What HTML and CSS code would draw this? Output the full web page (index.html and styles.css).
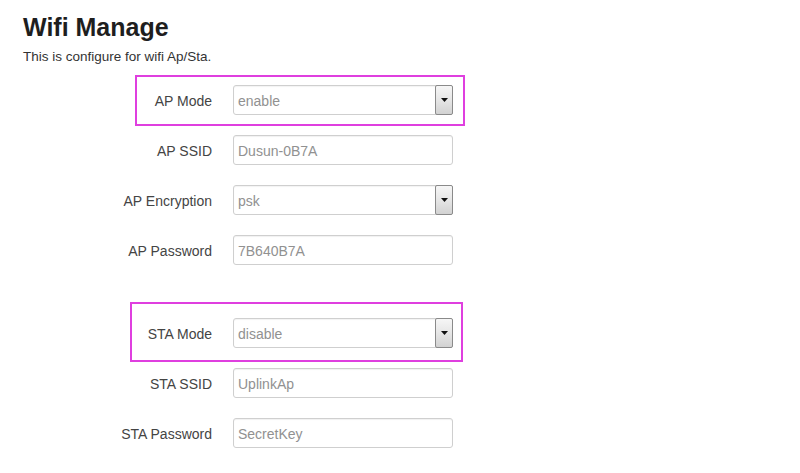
FILE: index.html
```html
<!DOCTYPE html>
<html>
<head>
<meta charset="utf-8">
<link rel="stylesheet" href="styles.css">
</head>
<body>
<div class="page">
  <h1 class="title">Wifi Manage</h1>
  <p class="subtitle">This is configure for wifi Ap/Sta.</p>
  <form class="form">
    <div class="section">
      <div class="row">
        <label class="label">AP Mode</label>
        <div class="select"><span class="value">enable</span><span class="btn"><svg width="7" height="4" viewBox="0 0 7 4"><path d="M0 0H7L3.5 4Z" fill="#111"/></svg></span></div>
      </div>
      <div class="row">
        <label class="label">AP SSID</label>
        <div class="input"><span class="value">Dusun-0B7A</span></div>
      </div>
      <div class="row">
        <label class="label">AP Encryption</label>
        <div class="select"><span class="value">psk</span><span class="btn"><svg width="7" height="4" viewBox="0 0 7 4"><path d="M0 0H7L3.5 4Z" fill="#111"/></svg></span></div>
      </div>
      <div class="row">
        <label class="label">AP Password</label>
        <div class="input"><span class="value">7B640B7A</span></div>
      </div>
    </div>
    <div class="section section-sta">
      <div class="row">
        <label class="label">STA Mode</label>
        <div class="select"><span class="value">disable</span><span class="btn"><svg width="7" height="4" viewBox="0 0 7 4"><path d="M0 0H7L3.5 4Z" fill="#111"/></svg></span></div>
      </div>
      <div class="row">
        <label class="label">STA SSID</label>
        <div class="input"><span class="value">UplinkAp</span></div>
      </div>
      <div class="row">
        <label class="label">STA Password</label>
        <div class="input"><span class="value">SecretKey</span></div>
      </div>
    </div>
  </form>
  <div class="mark mark-ap"></div>
  <div class="mark mark-sta"></div>
</div>
</body>
</html>
```
FILE: styles.css
```css
html, body {
  margin: 0;
  padding: 0;
  background: #fff;
}
.page {
  position: relative;
  width: 800px;
  height: 473px;
  padding: 12px 0 0 23px;
  box-sizing: border-box;
  font-family: "Liberation Sans", Arial, sans-serif;
  overflow: hidden;
}
.title {
  margin: 0;
  font-size: 25px;
  line-height: 30px;
  font-weight: bold;
  color: #1e1e1e;
}
.subtitle {
  margin: 7px 0 0 0;
  font-size: 13.5px;
  line-height: 16px;
  color: #333;
}
.form {
  margin-top: 20px;
  display: flex;
  flex-direction: column;
  gap: 53px;
}
.section {
  display: flex;
  flex-direction: column;
  gap: 20px;
}
.row {
  display: flex;
  align-items: center;
  gap: 21px;
  height: 30px;
}
.label {
  width: 189px;
  text-align: right;
  font-size: 14px;
  color: #444;
  padding-top: 2px;
}
.input, .select {
  width: 220px;
  height: 30px;
  box-sizing: border-box;
  border: 1px solid #cfcfcf;
  border-radius: 3px;
  box-shadow: inset 0 1px 1px rgba(0,0,0,0.06);
  display: flex;
  align-items: center;
  background: #fff;
}
.value {
  flex: 1;
  padding: 1px 0 0 4px;
  font-size: 14px;
  color: #919191;
}
.select {
  border-radius: 3px;
  box-shadow: inset 0 1px 1px rgba(0,0,0,0.05);
}
.btn {
  width: 18px;
  height: 30px;
  margin: -1px -1px -1px 0;
  box-sizing: border-box;
  border: 1px solid #8a8a8a;
  border-radius: 2px;
  background: linear-gradient(#f6f6f6, #e6e6e6 50%, #d2d2d2);
  display: flex;
  align-items: center;
  justify-content: center;
}
.btn svg {
  display: block;
}
.mark {
  position: absolute;
  box-sizing: border-box;
  border: 2px solid #df3fdf;
}
.mark-ap {
  left: 135px;
  top: 75px;
  width: 330px;
  height: 51px;
}
.mark-sta {
  left: 130px;
  top: 302px;
  width: 333px;
  height: 60px;
}
```
